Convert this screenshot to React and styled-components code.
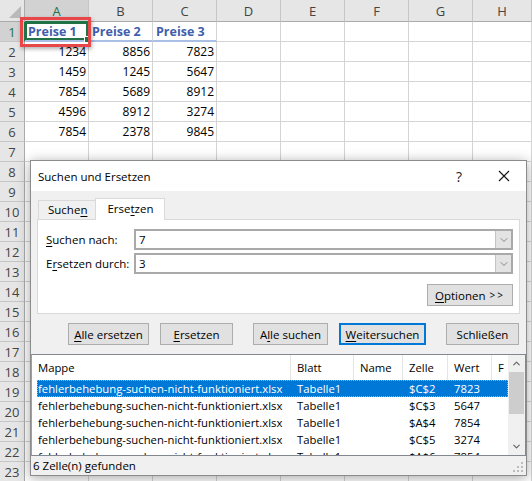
import React from "react";
import styled, { createGlobalStyle, css } from "styled-components";
import { ChevronDown, ChevronUp } from "lucide-react";

const GlobalStyle = createGlobalStyle`
  html, body {
    margin: 0;
    padding: 0;
    background: #fff;
    overflow: hidden;
  }
  body {
    font-family: "Open Sans", "Liberation Sans", sans-serif;
  }
`;

const COLUMNS = ["A", "B", "C", "D", "E", "F", "G", "H"];
const HEADINGS = ["Preise 1", "Preise 2", "Preise 3"];
const VALUES = [
  [1234, 8856, 7823],
  [1459, 1245, 5647],
  [7854, 5689, 8912],
  [4596, 8912, 3274],
  [7854, 2378, 9845],
];
const ROW_COUNT = 23;

const FILE = "fehlerbehebung-suchen-nicht-funktioniert.xlsx";
const RESULTS = [
  ["$C$2", "7823"],
  ["$C$3", "5647"],
  ["$A$4", "7854"],
  ["$C$5", "3274"],
  ["$A$6", "7854"],
  ["$B$6", "2378"],
];

export default function App() {
  const rows = [];
  for (let r = 1; r <= ROW_COUNT; r++) {
    rows.push(
      <React.Fragment key={r}>
        <RowHead $active={r === 1}>{r}</RowHead>
        {COLUMNS.map((c, i) => {
          if (r === 1) {
            return (
              <Cell key={c} $heading={i < 3} $selected={i === 0}>
                {HEADINGS[i]}
                {i === 0 && <FillHandle />}
              </Cell>
            );
          }
          const v = VALUES[r - 2] ? VALUES[r - 2][i] : undefined;
          return (
            <Cell key={c} $num>
              {v}
            </Cell>
          );
        })}
      </React.Fragment>
    );
  }

  return (
    <>
      <GlobalStyle />
      <Sheet>
        <Corner />
        {COLUMNS.map((c, i) => (
          <ColHead key={c} $active={i === 0}>
            {c}
          </ColHead>
        ))}
        {rows}

        <Highlight />

        <Dialog>
          <TitleBar>
            <Title>Suchen und Ersetzen</Title>
            <TitleActions>
              <Help>?</Help>
              <CloseIcon viewBox="0 0 12 12">
                <path d="M1 1 L11 11 M11 1 L1 11" />
              </CloseIcon>
            </TitleActions>
          </TitleBar>

          <Body>
            <TabStrip>
              <Tab>
                Suche<u>n</u>
              </Tab>
              <Tab $active>
                Erse<u>t</u>zen
              </Tab>
            </TabStrip>
            <Panel>
              <FieldRow>
                <span>
                  <u>S</u>uchen nach:
                </span>
                <Combo>
                  <ComboText>7</ComboText>
                  <ComboButton>
                    <ChevronDown size={12} strokeWidth={1.3} />
                  </ComboButton>
                </Combo>
              </FieldRow>
              <FieldRow>
                <span>
                  E<u>r</u>setzen durch:
                </span>
                <Combo>
                  <ComboText>3</ComboText>
                  <ComboButton>
                    <ChevronDown size={12} strokeWidth={1.3} />
                  </ComboButton>
                </Combo>
              </FieldRow>
              <OptionsRow>
                <Button $w={86}>
                  <u>O</u>ptionen <Arrows>&gt;&gt;</Arrows>
                </Button>
              </OptionsRow>
            </Panel>

            <ButtonBar>
              <ButtonGroup>
                <Button $w={81}>
                  <u>A</u>lle ersetzen
                </Button>
                <Button $w={73}>
                  <u>E</u>rsetzen
                </Button>
              </ButtonGroup>
              <ButtonGroup>
                <Button $w={75}>
                  A<u>l</u>le suchen
                </Button>
                <Button $w={87} $default>
                  <u>W</u>eitersuchen
                </Button>
              </ButtonGroup>
              <ButtonGroup>
                <Button $w={73}>Schließen</Button>
              </ButtonGroup>
            </ButtonBar>
          </Body>

          <ResultList>
            <ResultContent>
              <ListHeader>
                <HeaderCell>Mappe</HeaderCell>
                <HeaderCell>Blatt</HeaderCell>
                <HeaderCell>Name</HeaderCell>
                <HeaderCell>Zelle</HeaderCell>
                <HeaderCell>Wert</HeaderCell>
                <HeaderCell $last>F</HeaderCell>
              </ListHeader>
              {RESULTS.map(([cell, value], i) => (
                <ResultRow key={i} $selected={i === 0}>
                  <ResultCell $first>{FILE}</ResultCell>
                  <ResultCell>Tabelle1</ResultCell>
                  <ResultCell />
                  <ResultCell>{cell}</ResultCell>
                  <ResultCell>{value}</ResultCell>
                  <ResultCell />
                </ResultRow>
              ))}
            </ResultContent>
            <ScrollBar>
              <ScrollArrow>
                <ChevronUp size={11} strokeWidth={2.4} />
              </ScrollArrow>
              <Thumb />
              <ScrollArrow>
                <ChevronDown size={11} strokeWidth={2.4} />
              </ScrollArrow>
            </ScrollBar>
          </ResultList>

          <StatusBar>
            <span>6 Zelle(n) gefunden</span>
            <Grip viewBox="0 0 10 10">
              <rect x="8" y="0" width="2" height="2" />
              <rect x="4" y="4" width="2" height="2" />
              <rect x="8" y="4" width="2" height="2" />
              <rect x="0" y="8" width="2" height="2" />
              <rect x="4" y="8" width="2" height="2" />
              <rect x="8" y="8" width="2" height="2" />
            </Grip>
          </StatusBar>
        </Dialog>
      </Sheet>
    </>
  );
}

/* ---------- spreadsheet ---------- */

const Sheet = styled.div`
  position: relative;
  display: grid;
  grid-template-columns: 25px repeat(7, 64px) 1fr;
  grid-template-rows: 22px;
  grid-auto-rows: 20px;
  width: 532px;
  height: 481px;
  overflow: hidden;
  font-family: "Open Sans", "Liberation Sans", sans-serif;
  font-size: 12px;
  color: #000;
`;

const HeadBase = styled.div`
  box-sizing: border-box;
  display: flex;
  align-items: center;
  justify-content: center;
  background: ${(p) => (p.$active ? "#D2D2D2" : "#E6E6E6")};
  color: ${(p) => (p.$active ? "#217346" : "#444")};
  font-size: 13px;
`;

const Corner = styled(HeadBase)`
  position: relative;
  border-right: 1px solid #ababab;
  border-bottom: 1px solid #ababab;
  &::after {
    content: "";
    position: absolute;
    right: 3px;
    bottom: 3px;
    border-style: solid;
    border-width: 0 0 12px 12px;
    border-color: transparent transparent #b9b9b9 transparent;
  }
`;

const ColHead = styled(HeadBase)`
  border-right: 1px solid #c6c6c6;
  border-bottom: 1px solid ${(p) => (p.$active ? "#217346" : "#ababab")};
  padding-top: 1px;
`;

const RowHead = styled(HeadBase)`
  border-right: 1px solid ${(p) => (p.$active ? "#217346" : "#ababab")};
  border-bottom: 1px solid #c6c6c6;
`;

const Cell = styled.div`
  position: relative;
  box-sizing: border-box;
  display: flex;
  align-items: center;
  justify-content: ${(p) => (p.$num ? "flex-end" : "flex-start")};
  padding: 0 2px 0 3px;
  border-right: 1px solid #d4d4d4;
  border-bottom: 1px solid #d4d4d4;
  white-space: nowrap;
  ${(p) =>
    p.$heading &&
    css`
      color: #3f5fab;
      font-weight: 700;
      font-size: 12.5px;
      border-bottom: 2px solid #a9bfe6;
    `}
  ${(p) =>
    p.$selected &&
    css`
      box-shadow: inset 0 0 0 2px #217346;
      z-index: 1;
    `}
`;

const FillHandle = styled.span`
  position: absolute;
  right: -3px;
  bottom: -3px;
  width: 5px;
  height: 5px;
  background: #217346;
  border: 1px solid #fff;
`;

const Highlight = styled.div`
  position: absolute;
  left: 20px;
  top: 17px;
  width: 71px;
  height: 30px;
  box-sizing: border-box;
  border: 3px solid #e8474a;
  box-shadow: 1px 2px 4px rgba(0, 0, 0, 0.3);
  z-index: 2;
  pointer-events: none;
`;

/* ---------- dialog ---------- */

const Dialog = styled.div`
  position: absolute;
  left: 30px;
  top: 160px;
  width: 497px;
  height: 316px;
  box-sizing: border-box;
  display: flex;
  flex-direction: column;
  background: #f0f0f0;
  border: 1px solid #8c8c8c;
  box-shadow: 0 2px 12px rgba(0, 0, 0, 0.35);
  z-index: 3;
  font-family: "Open Sans", "Liberation Sans", sans-serif;
  font-size: 11px;
  color: #000;

  u {
    text-decoration-thickness: 1px;
    text-underline-offset: 2px;
  }
`;

const TitleBar = styled.div`
  height: 30px;
  flex: none;
  display: flex;
  align-items: center;
  justify-content: space-between;
  padding-left: 7px;
  background: #fff;
`;

const Title = styled.span`
  font-size: 11.5px;
`;

const TitleActions = styled.div`
  display: flex;
  align-items: center;
  gap: 36px;
  padding-right: 16px;
`;

const Help = styled.span`
  font-size: 14px;
  color: #222;
`;

const CloseIcon = styled.svg`
  width: 12px;
  height: 12px;
  stroke: #111;
  stroke-width: 1.1;
  fill: none;
`;

const Body = styled.div`
  padding: 7px 6px 0 6px;
  display: flex;
  flex-direction: column;
`;

const TabStrip = styled.div`
  display: flex;
  align-items: flex-end;
  height: 21px;
  padding-left: 1px;
`;

const Tab = styled.div`
  box-sizing: border-box;
  height: ${(p) => (p.$active ? 22 : 19)}px;
  margin-bottom: ${(p) => (p.$active ? -1 : 0)}px;
  margin-left: ${(p) => (p.$active ? -1 : 0)}px;
  padding: ${(p) => (p.$active ? "2px 10px 0 11px" : "1px 8px 0 9px")};
  border: 1px solid #d9d9d9;
  border-bottom: none;
  background: ${(p) => (p.$active ? "#fff" : "#f0f0f0")};
  position: relative;
  z-index: ${(p) => (p.$active ? 1 : 0)};
  font-size: 11.5px;
`;

const Panel = styled.div`
  box-sizing: border-box;
  height: 95px;
  background: #fff;
  border: 1px solid #d9d9d9;
  padding: 9px 6px 0 8px;
  display: flex;
  flex-direction: column;
  gap: 3px;
`;

const FieldRow = styled.div`
  display: grid;
  grid-template-columns: 88px 1fr;
  align-items: center;
  height: 21px;
  font-size: 11.5px;
`;

const Combo = styled.div`
  box-sizing: border-box;
  height: 21px;
  display: flex;
  border: 2px solid #a9a9a9;
  background: #fff;
`;

const ComboText = styled.span`
  flex: 1;
  padding-left: 3px;
  line-height: 17px;
`;

const ComboButton = styled.span`
  width: 15px;
  display: flex;
  align-items: center;
  justify-content: center;
  background: #e3e3e3;
  border-left: 1px solid #c4c4c4;
  color: #555;
`;

const OptionsRow = styled.div`
  display: flex;
  justify-content: flex-end;
  margin-top: 7px;
`;

const Button = styled.div`
  box-sizing: border-box;
  width: ${(p) => p.$w}px;
  height: 22px;
  display: flex;
  align-items: center;
  justify-content: center;
  background: #e1e1e1;
  border: ${(p) => (p.$default ? "2px solid #0078d7" : "1px solid #adadad")};
  font-size: 11.5px;
  white-space: nowrap;
`;

const Arrows = styled.span`
  margin-left: 4px;
  letter-spacing: 2px;
  font-size: 10px;
`;

const ButtonBar = styled.div`
  display: flex;
  gap: 20px;
  margin-top: 9px;
  padding-left: 31px;
`;

const ButtonGroup = styled.div`
  display: flex;
  gap: 11px;
`;

/* ---------- result list ---------- */

const ResultList = styled.div`
  box-sizing: border-box;
  height: 102px;
  margin-top: 9px;
  display: flex;
  background: #fff;
  border: 1px solid #828790;
  border-left-color: #a0a0a0;
  overflow: hidden;
`;

const ResultContent = styled.div`
  flex: 1;
  overflow: hidden;
  font-size: 11.3px;
`;

const ListHeader = styled.div`
  display: grid;
  grid-template-columns: 259px 63px 49px 45px 44px 1fr;
  height: 25px;
`;

const HeaderCell = styled.div`
  display: flex;
  align-items: center;
  padding-left: 6px;
  border-right: ${(p) => (p.$last ? "none" : "1px solid #e5e5e5")};
  overflow: hidden;
  white-space: nowrap;
`;

const ResultRow = styled.div`
  box-sizing: border-box;
  display: grid;
  grid-template-columns: 254px 63px 49px 45px 44px 1fr;
  height: 17px;
  margin-left: 5px;
  ${(p) =>
    p.$selected &&
    css`
      background: #0078d7;
      color: #fff;
      outline: 1px dotted #f0a040;
      outline-offset: -1px;
    `}
`;

const ResultCell = styled.div`
  padding-left: ${(p) => (p.$first ? 1 : 6)}px;
  line-height: 17px;
  white-space: nowrap;
  overflow: hidden;
`;

const ScrollBar = styled.div`
  width: 17px;
  flex: none;
  display: flex;
  flex-direction: column;
  background: #f0f0f0;
`;

const ScrollArrow = styled.div`
  height: 17px;
  display: flex;
  align-items: center;
  justify-content: center;
  color: #606060;
`;

const Thumb = styled.div`
  height: 42px;
  margin: 0 1px;
  background: #cdcdcd;
  margin-bottom: auto;
`;

const StatusBar = styled.div`
  flex: 1;
  display: flex;
  align-items: center;
  justify-content: space-between;
  padding: 0 3px 0 2px;
  font-size: 11.5px;
`;

const Grip = styled.svg`
  width: 10px;
  height: 10px;
  align-self: flex-end;
  margin-bottom: 3px;
  fill: #bcbcbc;
`;
